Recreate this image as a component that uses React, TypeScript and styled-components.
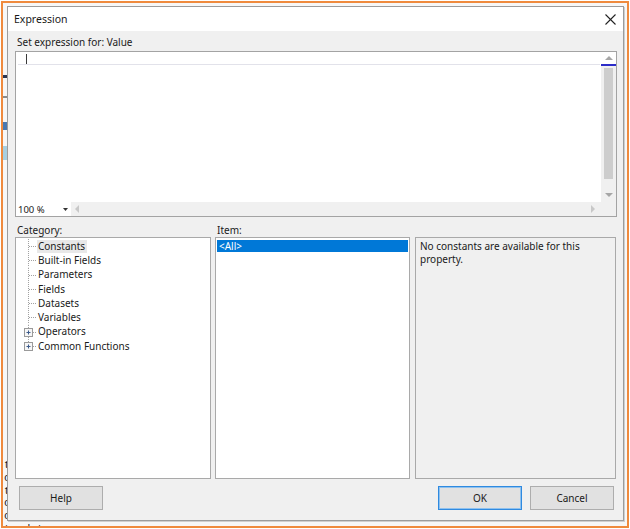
import React from "react";
import styled, { createGlobalStyle } from "styled-components";

const Global = createGlobalStyle`
  html, body { margin: 0; padding: 0; background: #ffffff; }
  * { box-sizing: border-box; }
`;

const UI = `"Noto Sans", "Open Sans", "DejaVu Sans", sans-serif`;

const Frame = styled.div`
  position: relative;
  width: 628px;
  height: 527px;
  margin: 1px;
  border: 2px solid #ef8a3d;
  padding: 3px 3px 5px 4px;
  background: #f7f7f7;
  overflow: hidden;
`;

const Behind = styled.div`
  position: absolute;
  left: 1px;
  top: 456px;
  display: flex;
  flex-direction: column;
  font-family: "Liberation Mono", monospace;
  font-size: 11px;
  line-height: 12.8px;
  color: #222;
  z-index: 0;
`;

const BehindLine = styled.span`
  display: block;
  width: 7px;
  overflow: hidden;
  white-space: nowrap;
`;

const BehindTail = styled.span`
  display: block;
  white-space: nowrap;
`;

const LeftMarks = styled.div`
  position: absolute;
  left: 0;
  top: 60px;
  width: 4px;
  display: flex;
  flex-direction: column;
  z-index: 0;
`;

const Mark = styled.div<{ $c: string; $h: number; $m: number }>`
  height: ${(p) => p.$h}px;
  margin-top: ${(p) => p.$m}px;
  background: ${(p) => p.$c};
`;

const Dialog = styled.div`
  position: relative;
  z-index: 1;
  height: 100%;
  display: flex;
  flex-direction: column;
  border: 1px solid #9c9c9c;
  box-shadow: 1px 1px 0 #cfcfcf;
  background: #f0f0f0;
  font-family: ${UI};
  font-size: 10px;
  color: #1a1a1a;
`;

const TitleBar = styled.div`
  height: 24px;
  flex: none;
  background: #ffffff;
  display: flex;
  align-items: center;
  justify-content: space-between;
  padding: 0 6px 0 6px;
  font-size: 10.5px;
`;

const CloseBtn = styled.div`
  width: 14px;
  height: 14px;
  display: flex;
  align-items: center;
  justify-content: center;
  margin-top: 1px;
`;

const Body = styled.div`
  flex: 1;
  display: flex;
  flex-direction: column;
  padding: 0 6px 0 7px;
`;

const Label = styled.div<{ $top: number }>`
  height: 13px;
  line-height: 13px;
  margin-top: ${(p) => p.$top}px;
  padding-left: 2px;
  white-space: nowrap;
`;

const Editor = styled.div`
  margin-top: 2px;
  height: 166px;
  border: 1px solid #a3a3a3;
  display: grid;
  grid-template-columns: 1fr 15px;
  grid-template-rows: 1fr 14px;
  background: #ffffff;
`;

const TextArea = styled.div`
  background: #ffffff;
  padding: 1px 1px 0 2px;
`;

const FirstLine = styled.div`
  height: 12px;
  border-bottom: 1px solid #e2e2ea;
  padding-left: 8px;
  display: flex;
  align-items: center;
`;

const Caret = styled.div`
  width: 1px;
  height: 10px;
  background: #3a3a3a;
`;

const VScroll = styled.div`
  background: #f0f0f0;
  display: flex;
  flex-direction: column;
`;

const ArrowBox = styled.div<{ $h: number; $bg: string }>`
  height: ${(p) => p.$h}px;
  flex: none;
  background: ${(p) => p.$bg};
  display: flex;
  align-items: center;
  justify-content: center;
`;

const BlueLine = styled.div`
  height: 2px;
  background: #2c2cc8;
  flex: none;
`;

const Track = styled.div`
  flex: 1;
  padding: 2px 3px 0 3px;
`;

const Thumb = styled.div`
  height: 111px;
  background: #cdcdcd;
`;

const BottomBar = styled.div`
  grid-column: 1 / 2;
  display: flex;
  background: #f0f0f0;
`;

const ZoomCombo = styled.div`
  width: 55px;
  background: #ffffff;
  display: flex;
  align-items: center;
  justify-content: space-between;
  padding: 0 3px 0 2px;
  font-size: 9.5px;
`;

const HScroll = styled.div`
  flex: 1;
  display: flex;
  align-items: center;
  justify-content: space-between;
  padding: 0 6px 0 4px;
`;

const Corner = styled.div`
  background: #f0f0f0;
`;

const Columns = styled.div`
  display: grid;
  grid-template-columns: 196px 195px 202px;
  column-gap: 4px;
  margin-top: 7px;
  & > :nth-child(3) { margin-left: 1px; }
`;

const Column = styled.div`
  display: flex;
  flex-direction: column;
`;

const ColLabel = styled.div`
  height: 13px;
  line-height: 13px;
  padding-left: 2px;
`;

const ListBox = styled.div<{ $bg?: string }>`
  height: 242px;
  border: 1px solid #a9a9a9;
  background: ${(p) => p.$bg ?? "#ffffff"};
`;

const Tree = styled.div`
  padding: 1px 0 0 4px;
`;

const TreeRow = styled.div`
  height: 14.3px;
  display: flex;
  align-items: center;
`;

const TreeText = styled.span<{ $hl?: boolean }>`
  margin-left: 1px;
  padding: 0 2px 0 1px;
  line-height: 13px;
  background: ${(p) => (p.$hl ? "#e8e8e8" : "transparent")};
`;

const ItemRow = styled.div<{ $sel?: boolean }>`
  margin: 2px 1px 0 1px;
  height: 12px;
  line-height: 12px;
  padding-left: 2px;
  background: ${(p) => (p.$sel ? "#0078d7" : "transparent")};
  color: ${(p) => (p.$sel ? "#ffffff" : "inherit")};
`;

const Desc = styled.div`
  padding: 2px 4px;
  line-height: 13px;
  width: 190px;
`;

const Buttons = styled.div`
  display: flex;
  justify-content: space-between;
  margin-top: 7px;
  padding: 0 3px 0 4px;
`;

const RightButtons = styled.div`
  display: flex;
  gap: 8px;
`;

const Button = styled.div<{ $primary?: boolean }>`
  width: 84px;
  height: 24px;
  display: flex;
  align-items: center;
  justify-content: center;
  background: #e1e1e1;
  border: 1px solid ${(p) => (p.$primary ? "#2f8ae0" : "#adadad")};
  box-shadow: ${(p) => (p.$primary ? "inset 0 0 0 1px #8fc1ee" : "none")};
  font-size: 10px;
`;

const Tri = ({ dir, color }: { dir: "up" | "down" | "left" | "right"; color: string }) => {
  const pts: Record<string, string> = {
    up: "0,4 4,0 8,4",
    down: "0,0 8,0 4,4",
    left: "4,0 4,8 0,4",
    right: "0,0 0,8 4,4",
  };
  const w = dir === "up" || dir === "down" ? 8 : 4;
  const h = dir === "up" || dir === "down" ? 4 : 8;
  return (
    <svg width={w} height={h} viewBox={`0 0 ${w} ${h}`}>
      <polygon points={pts[dir]} fill={color} />
    </svg>
  );
};

const Connector = ({ plus, last }: { plus?: boolean; last?: boolean }) => (
  <svg width="16" height="14.3" viewBox="0 0 16 14.3" style={{ flex: "none" }}>
    <line x1="8.5" y1="0" x2="8.5" y2={last ? 7 : 14.3} stroke="#a0a0a0" strokeDasharray="1 1" />
    <line x1="9" y1="7.5" x2="16" y2="7.5" stroke="#a0a0a0" strokeDasharray="1 1" />
    {plus && (
      <g>
        <rect x="4.5" y="3.5" width="8" height="8" fill="#f6f6f6" stroke="#9a9a9a" />
        <line x1="6.5" y1="7.5" x2="10.5" y2="7.5" stroke="#3b5a8a" />
        <line x1="8.5" y1="5.5" x2="8.5" y2="9.5" stroke="#3b5a8a" />
      </g>
    )}
  </svg>
);

const categories: { name: string; plus?: boolean; hl?: boolean }[] = [
  { name: "Constants", hl: true },
  { name: "Built-in Fields" },
  { name: "Parameters" },
  { name: "Fields" },
  { name: "Datasets" },
  { name: "Variables" },
  { name: "Operators", plus: true },
  { name: "Common Functions", plus: true },
];

const behindLetters = ["t", "c", "t", "c", "c"];

export default function App() {
  return (
    <>
      <Global />
      <Frame>
        <LeftMarks>
          <Mark $c="#2b3550" $h={3} $m={12} />
          <Mark $c="#8a8a8a" $h={2} $m={18} />
          <Mark $c="#4a78b0" $h={8} $m={24} />
          <Mark $c="#a8cfe0" $h={14} $m={16} />
        </LeftMarks>
        <Behind>
          {behindLetters.map((l, i) => (
            <BehindLine key={i}>{l}</BehindLine>
          ))}
          <BehindTail>to date.</BehindTail>
        </Behind>
        <Dialog>
          <TitleBar>
            <span>Expression</span>
            <CloseBtn>
              <svg width="11" height="11" viewBox="0 0 11 11">
                <line x1="0.5" y1="0.5" x2="10.5" y2="10.5" stroke="#222" strokeWidth="1.1" />
                <line x1="10.5" y1="0.5" x2="0.5" y2="10.5" stroke="#222" strokeWidth="1.1" />
              </svg>
            </CloseBtn>
          </TitleBar>
          <Body>
            <Label $top={5}>Set expression for: Value</Label>
            <Editor>
              <TextArea>
                <FirstLine>
                  <Caret />
                </FirstLine>
              </TextArea>
              <VScroll>
                <ArrowBox $h={12} $bg="#ffffff">
                  <Tri dir="up" color="#a6a6a6" />
                </ArrowBox>
                <BlueLine />
                <Track>
                  <Thumb />
                </Track>
                <ArrowBox $h={14} $bg="#f0f0f0">
                  <Tri dir="down" color="#a6a6a6" />
                </ArrowBox>
              </VScroll>
              <BottomBar>
                <ZoomCombo>
                  <span>100 %</span>
                  <svg width="5" height="3" viewBox="0 0 5 3">
                    <polygon points="0,0 5,0 2.5,3" fill="#333" />
                  </svg>
                </ZoomCombo>
                <HScroll>
                  <Tri dir="left" color="#c8c8c8" />
                  <Tri dir="right" color="#c8c8c8" />
                </HScroll>
              </BottomBar>
              <Corner />
            </Editor>
            <Columns>
              <Column>
                <ColLabel>Category:</ColLabel>
                <ListBox>
                  <Tree>
                    {categories.map((c, i) => (
                      <TreeRow key={c.name}>
                        <Connector plus={c.plus} last={i === categories.length - 1} />
                        <TreeText $hl={c.hl}>{c.name}</TreeText>
                      </TreeRow>
                    ))}
                  </Tree>
                </ListBox>
              </Column>
              <Column>
                <ColLabel>Item:</ColLabel>
                <ListBox>
                  <ItemRow $sel>&lt;All&gt;</ItemRow>
                </ListBox>
              </Column>
              <Column>
                <ColLabel>&nbsp;</ColLabel>
                <ListBox $bg="#f0f0f0">
                  <Desc>No constants are available for this property.</Desc>
                </ListBox>
              </Column>
            </Columns>
            <Buttons>
              <Button>Help</Button>
              <RightButtons>
                <Button $primary>OK</Button>
                <Button>Cancel</Button>
              </RightButtons>
            </Buttons>
          </Body>
        </Dialog>
      </Frame>
    </>
  );
}
